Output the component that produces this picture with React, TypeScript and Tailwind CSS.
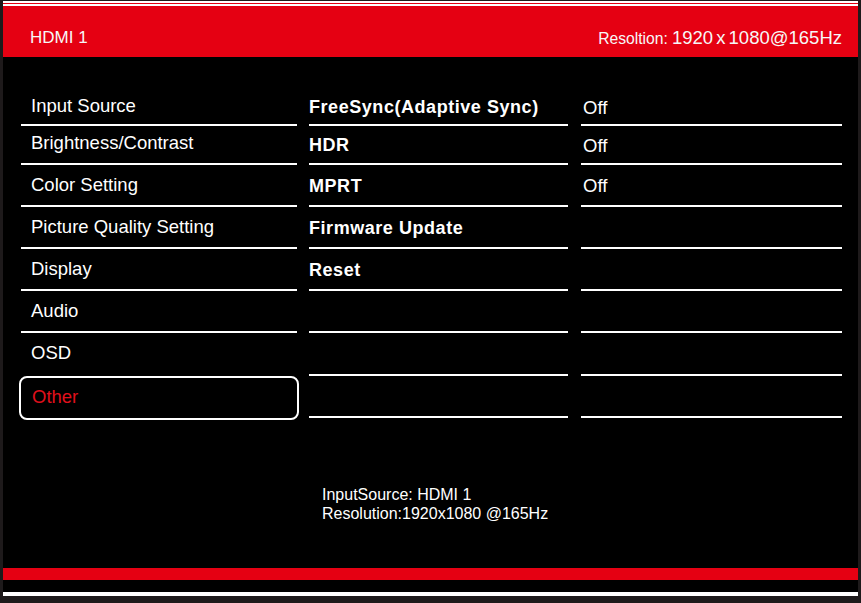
import React from 'react';

const LEFT_ITEMS = [
    'Input Source',
    'Brightness/Contrast',
    'Color Setting',
    'Picture Quality Setting',
    'Display',
    'Audio',
];

// row heights (px) incl. the 2px underline, taken from the OSD layout
const ROW_H = ['h-[41px]', 'h-[39px]', 'h-[42px]', 'h-[42px]', 'h-[42px]', 'h-[42px]', 'h-[43px]', 'h-[42px]'];

const MID_ITEMS = ['FreeSync(Adaptive Sync)', 'HDR', 'MPRT', 'Firmware Update', 'Reset', '', '', ''];
const RIGHT_ITEMS = ['Off', 'Off', 'Off', '', '', '', '', ''];

export default function App() {
    return (
        <div
            className="w-[861px] h-[603px] bg-[#1e1a1b] px-[3px] overflow-hidden"
            style={{ fontFamily: '"Liberation Sans", Arial, sans-serif' }}
        >
            <div className="h-[596px] flex flex-col bg-black">
                {/* top stripes */}
                <div className="h-[1px] bg-[#1e1a1b]" />
                <div className="h-[2px] bg-white" />
                <div className="h-[1px] bg-[#e50012]" />
                <div className="h-[2px] bg-white" />

                {/* Header */}
                <div className="h-[51px] bg-[#e50012] flex items-center justify-between pl-[27px] pr-[16px] pt-[13px] text-[#f7f7f7]">
                    <span className="text-[17px]">HDMI 1</span>
                    <div className="flex items-baseline">
                        <span className="text-[15.7px]">Resoltion:</span>
                        <span className="ml-[4px] text-[18.5px] [word-spacing:-2px]">1920 x 1080@165Hz</span>
                    </div>
                </div>

                {/* Main */}
                <div className="flex-1 flex flex-col pt-[28px]">
                    <div className="flex pl-[18px] gap-[12px]">
                        {/* Left menu */}
                        <div className="w-[276px] flex flex-col text-white text-[18.5px]">
                            {LEFT_ITEMS.map((item, i) => (
                                <div
                                    key={item}
                                    className={`${ROW_H[i]} border-b-2 border-white flex items-center pl-[10px] ${i === 0 ? 'pt-[2px]' : i === 1 ? 'pb-[3px]' : 'pb-[1px]'}`}
                                >
                                    {item}
                                </div>
                            ))}
                            <div className={`${ROW_H[6]} flex items-center pl-[10px] pb-[3px]`}>OSD</div>
                            <div className="h-[44px] -mx-[2px] border-2 border-white rounded-[8px] flex items-center pl-[11px] pb-[3px] text-[#e0101c]">
                                Other
                            </div>
                        </div>

                        {/* Middle column */}
                        <div className="w-[259px] flex flex-col text-white text-[18px] font-bold tracking-[0.55px]">
                            {MID_ITEMS.map((item, i) => (
                                <div
                                    key={i}
                                    className={`${ROW_H[i]} border-b-2 border-white flex items-center ${i === 0 ? 'pt-[6px]' : 'pt-[2px]'}`}
                                >
                                    {item}
                                </div>
                            ))}
                        </div>

                        {/* Right column */}
                        <div className="w-[261px] ml-px flex flex-col text-white text-[18.5px]">
                            {RIGHT_ITEMS.map((item, i) => (
                                <div
                                    key={i}
                                    className={`${ROW_H[i]} border-b-2 border-white flex items-center pl-[2px] ${i === 0 ? 'pt-[6px]' : 'pt-[2px]'}`}
                                >
                                    {item}
                                </div>
                            ))}
                        </div>
                    </div>

                    {/* Info */}
                    <div className="mt-[65px] pl-[319px] text-white text-[16px] leading-[19px]">
                        <div>InputSource: HDMI 1</div>
                        <div>Resolution:1920x1080 @165Hz</div>
                    </div>
                </div>

                {/* Bottom stripes */}
                <div className="h-[12px] bg-[#e50012]" />
                <div className="h-[12px] bg-black" />
                <div className="h-[4px] bg-white" />
            </div>
        </div>
    );
}
